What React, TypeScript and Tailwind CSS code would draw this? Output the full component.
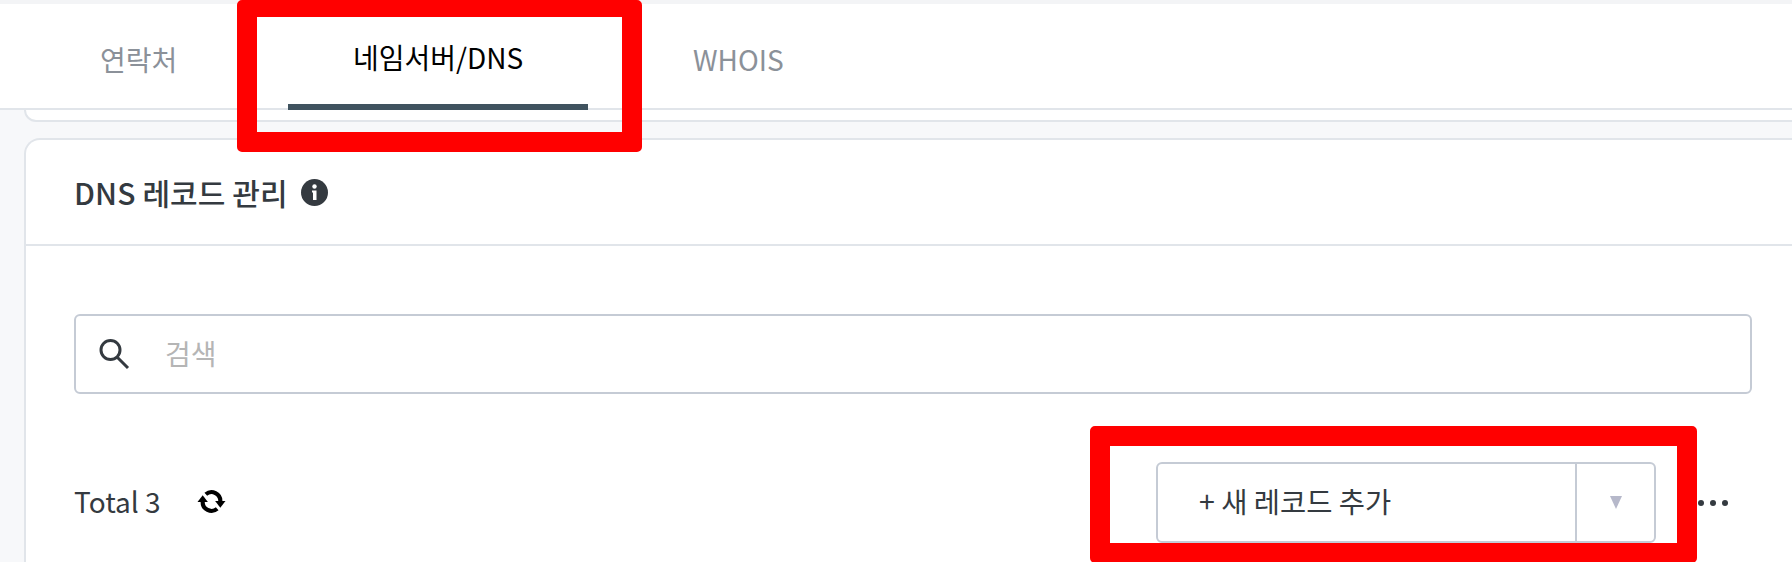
import React from "react";

const SearchIcon = () => (
  <svg width="32" height="32" viewBox="0 0 32 32" fill="none" stroke="#343a40" strokeWidth="3">
    <circle cx="12.5" cy="12" r="9.5" />
    <path d="M19 19 L30 30" />
  </svg>
);

const InfoIcon = () => (
  <svg width="27" height="27" viewBox="0 0 27 27">
    <circle cx="13.5" cy="13.5" r="13.5" fill="#343a40" />
    <circle cx="13.5" cy="7.5" r="2.2" fill="#fff" />
    <path d="M11 11.5 H15.5 V21 H12 V13.5 H11 Z" fill="#fff" />
  </svg>
);

const RefreshIcon = () => (
  <svg width="29" height="25" viewBox="0 0 28 24" fill="none" stroke="#000" strokeWidth="4">
    <path d="M19.5 19 A8.5 8.5 0 0 1 5.5 12" />
    <path d="M8.5 5 A8.5 8.5 0 0 1 22.5 12" />
    <path d="M0.5 12.5 H10.5 L5.5 6 Z" fill="#000" stroke="none" />
    <path d="M17.5 11.5 H27.5 L22.5 18 Z" fill="#000" stroke="none" />
  </svg>
);

const App = () => {
  return (
    <div className="relative h-[562px] w-[1792px] overflow-hidden bg-[#f7f8fa] font-['Noto_Sans_CJK_KR','Noto_Sans',sans-serif]">
      <div className="h-1 bg-[#f3f4f6]" />

      {/* tabs */}
      <div className="flex h-[106px] items-start border-b-2 border-[#e1e5ea] bg-white pl-[100px] text-[28px]">
        <div className="flex h-[104px] w-[188px] items-center pt-[6px] text-[#8b9199]">연락처</div>
        <div className="flex h-[106px] w-[300px] items-center justify-center border-b-[6px] border-[#40535f] pt-[6px] text-black">
          네임서버/DNS
        </div>
        <div className="ml-[105px] flex h-[104px] items-center pt-[6px] text-[#8b9199]">WHOIS</div>
      </div>

      <div className="ml-6">
        {/* bottom edge of the card above */}
        <div className="-mr-5 h-3 rounded-b-2xl border-x-2 border-b-2 border-[#e1e5ea] bg-white" />

        <div className="mt-4 h-[500px] rounded-tl-2xl border-l-2 border-t-2 border-[#e1e5ea] bg-white">
          <div className="flex h-[106px] items-center gap-[13px] border-b-2 border-[#e1e5ea] pl-12 text-[30px] font-medium tracking-[0.1px] text-[#343a40]">
            DNS 레코드 관리
            <InfoIcon />
          </div>

          <div className="pl-12 pr-10 pt-[68px]">
            <div className="flex h-[80px] items-center rounded-md border-2 border-[#c5cbd5] pl-[22px] text-[28px] text-[#b5b5b5]">
              <SearchIcon />
              <span className="ml-[35px] pb-[3px]">검색</span>
            </div>

            <div className="mt-[68px] flex h-[81px] items-center text-[28px] text-[#343a40]">
              <span className="pb-[4px]">Total 3</span>
              <span className="ml-9 pb-[2px]">
                <RefreshIcon />
              </span>
              <div className="ml-auto flex h-[81px] w-[500px] rounded-md border-2 border-[#c5cbd5]">
                <div className="flex flex-1 items-center pb-[3px] pl-[41px] text-[28.5px]">+ 새 레코드 추가</div>
                <div className="flex w-[79px] items-center justify-center border-l-2 border-[#c5cbd5]">
                  <div className="h-0 w-0 border-x-[6px] border-t-[13px] border-x-transparent border-t-[#b6b8ca]" />
                </div>
              </div>
              <div className="ml-[42px] mr-[24px] flex gap-[6px]">
                <div className="h-[6px] w-[6px] rounded-full bg-[#343a40]" />
                <div className="h-[6px] w-[6px] rounded-full bg-[#343a40]" />
                <div className="h-[6px] w-[6px] rounded-full bg-[#343a40]" />
              </div>
            </div>
          </div>
        </div>
      </div>

      {/* red annotation boxes */}
      <div className="absolute left-[237px] top-0 h-[152px] w-[405px] rounded-[5px] border-x-[20px] border-b-[20px] border-t-[17px] border-[#ff0000]" />
      <div className="absolute left-[1090px] top-[426px] h-[137px] w-[607px] rounded-[5px] border-[20px] border-[#ff0000]" />
    </div>
  );
};

export default App;
